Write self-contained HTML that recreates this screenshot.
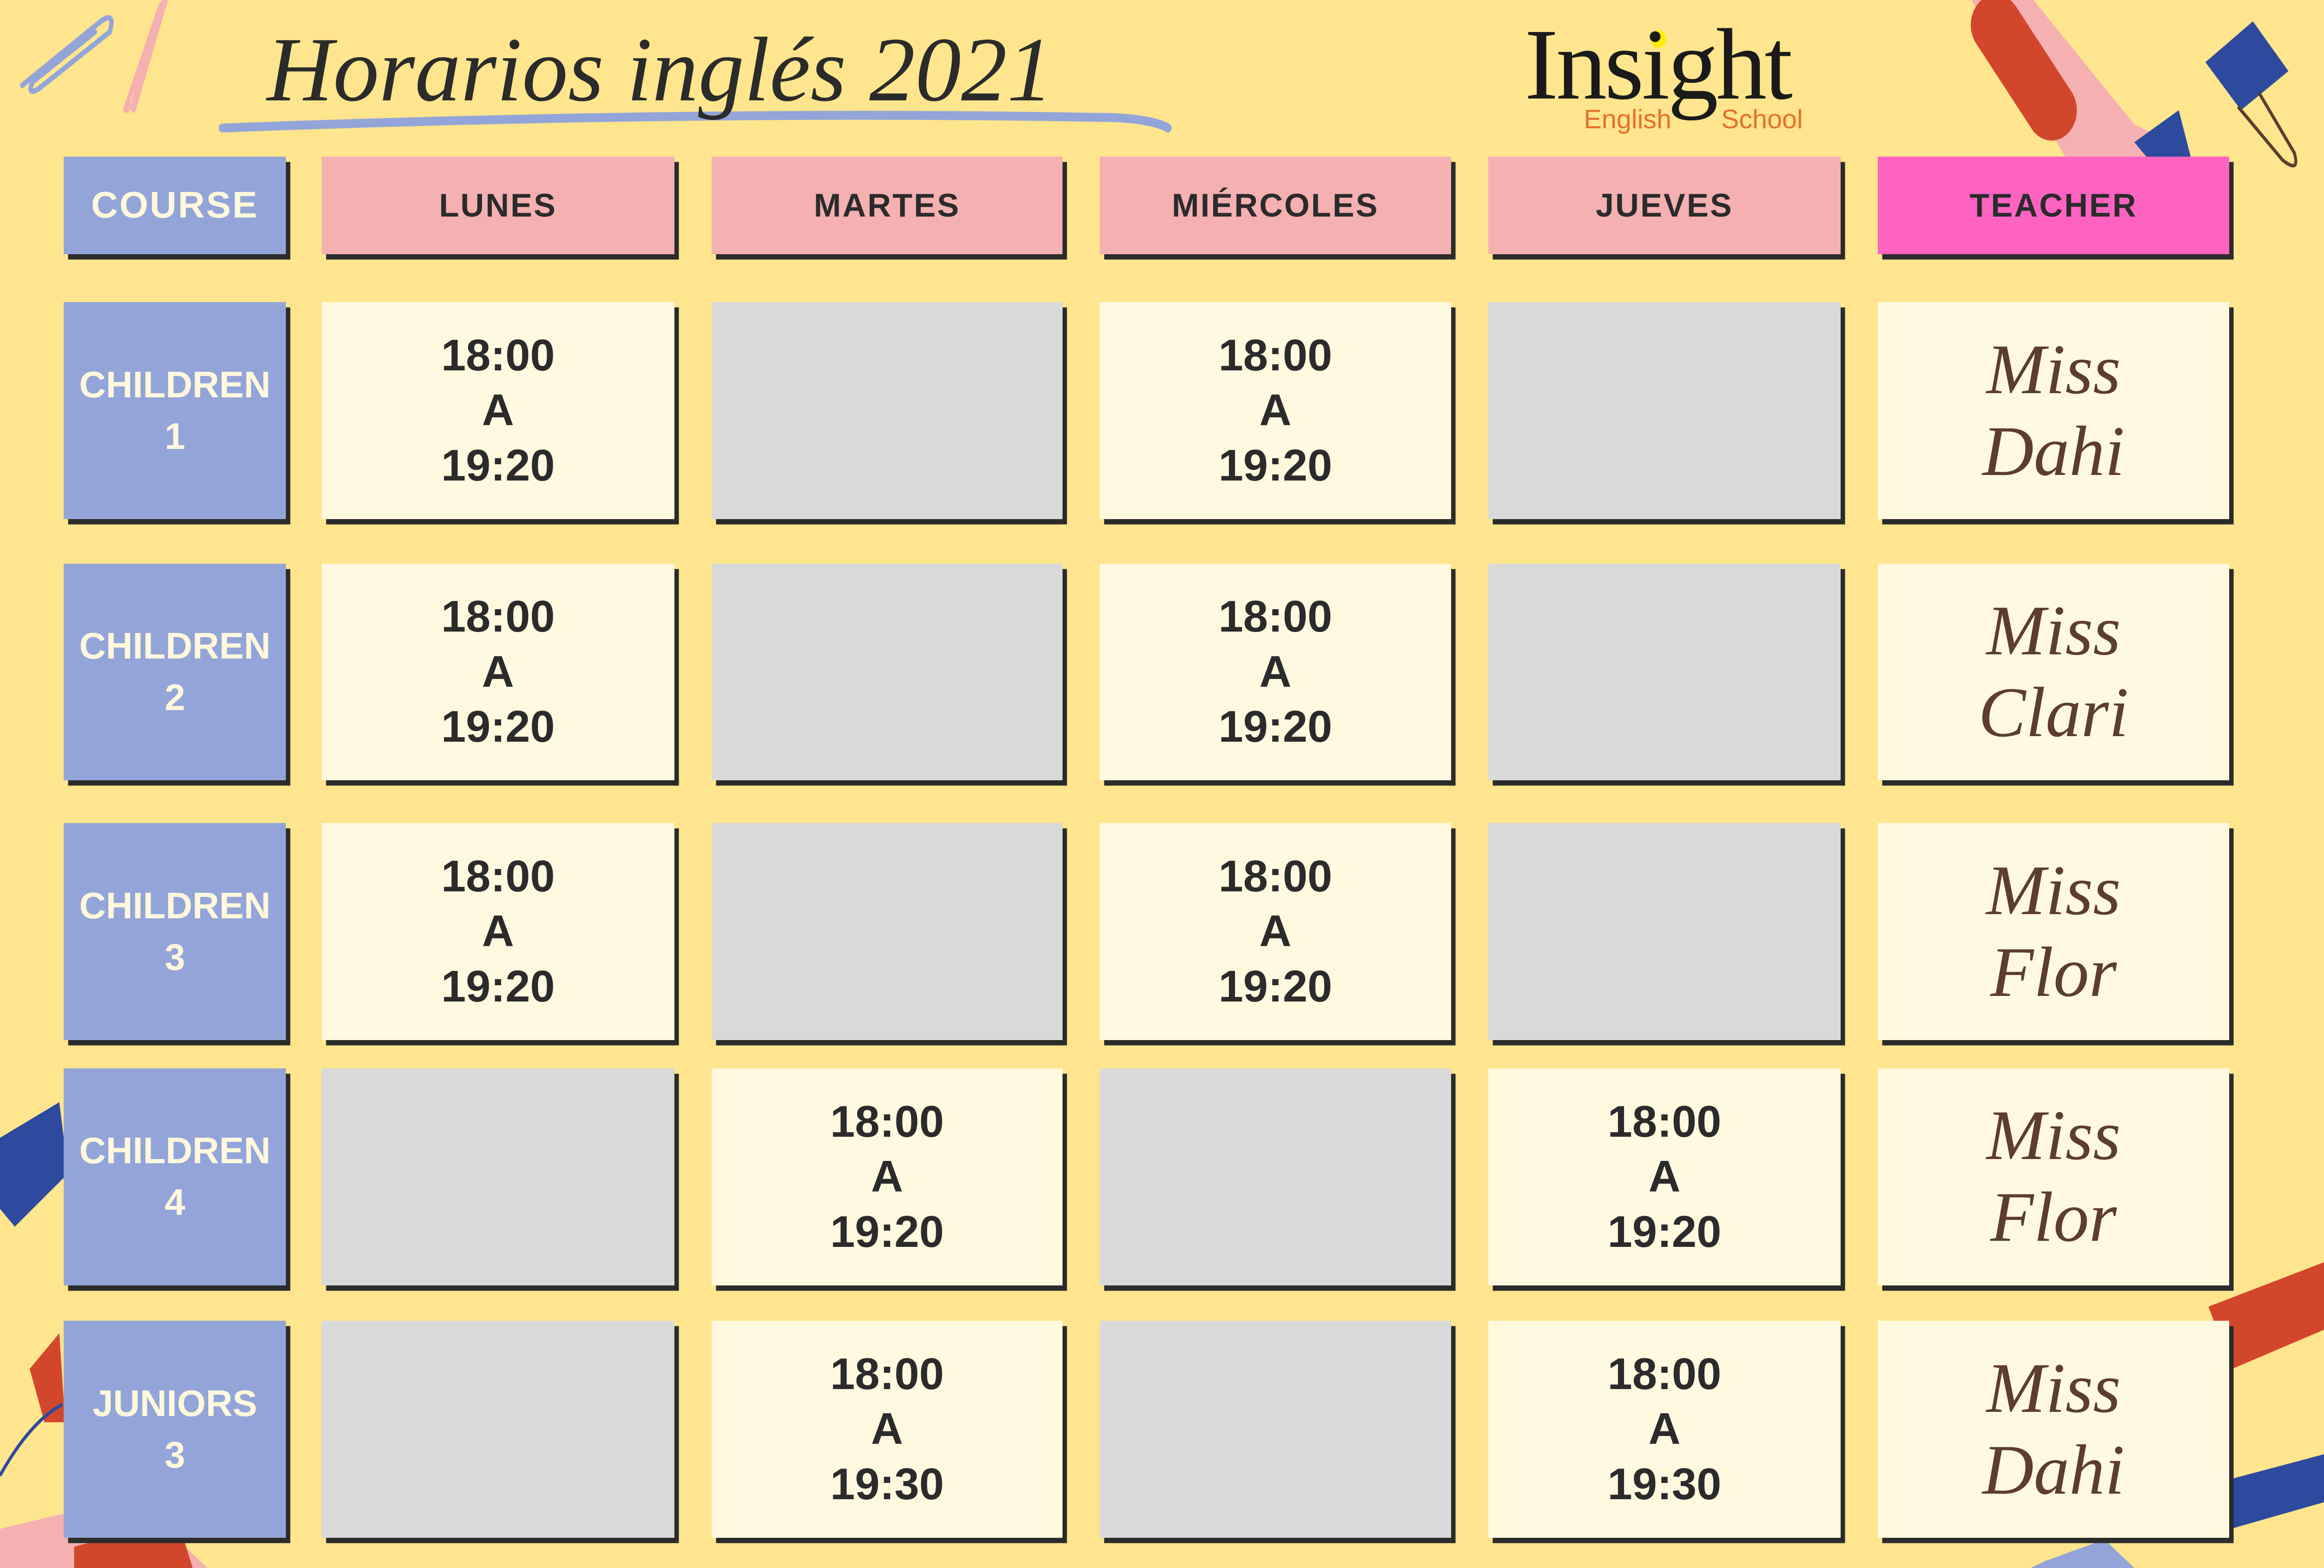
<!DOCTYPE html>
<html><head><meta charset="utf-8"><style>
html,body{margin:0;padding:0;width:100%;height:100%;overflow:hidden;}
body{background:#ffe58d;position:relative;font-family:"Liberation Sans","DejaVu Sans",sans-serif;}
.b{position:absolute;box-sizing:border-box;left:calc(var(--x)*0.063776vw);top:calc(var(--y)*0.113379vh);width:calc(var(--w)*0.063776vw);height:calc(122*0.113379vh);box-shadow:calc(3*0.063776vw) calc(3*0.113379vh) 0 #2b2b2b;display:flex;align-items:center;justify-content:center;text-align:center;font-weight:bold;}
.h{top:calc(88*0.113379vh);height:calc(55*0.113379vh);font-size:calc(22*0.063776vw);letter-spacing:calc(1*0.063776vw);color:#2b2b2b;background:#f5b0b2;}
.c{background:#93a5d8;color:#fff8dc;font-size:calc(25*0.063776vw);line-height:calc(29*0.113379vh);}
.t{background:#fff9df;color:#2b2b2b;font-size:calc(30*0.063776vw);line-height:calc(31*0.113379vh);}
.g{background:#d9d9d9;}
.n{background:#fff9df;color:#5c3d2e;font-family:"Liberation Serif",serif;font-style:italic;font-weight:normal;font-size:calc(48*0.063776vw);line-height:calc(46*0.113379vh);}
.a{position:absolute;white-space:nowrap;}
</style></head><body>
<svg viewBox="0 0 1568 882" preserveAspectRatio="none" style="position:absolute;left:0;top:0;width:100vw;height:100vh">
<g fill="none" stroke-linecap="round">
<path d="M15 48 L68 12 Q78 6 74 18 L26 50 Q18 54 22 46 L64 18" stroke="#93a5d8" stroke-width="3"/>
<path d="M90 62 L110 5 Q114 -4 108 4 L86 58 Q82 66 90 58 L104 14" stroke="#f5b0b2" stroke-width="3"/>
</g>
<path d="M1330 0 L1372 0 L1440 70 L1478 85 L1470 100 L1402 100 Z" fill="#f5b0b2"/>
<rect x="1350" y="-10" width="34" height="95" rx="17" fill="#d2472c" transform="rotate(-38 1367 40)"/>
<path d="M1440 80 L1470 62 L1478 88 L1452 92 Z" fill="#2e4a9e"/>
<path d="M1488 35 L1520 12 L1544 40 L1512 62 Z" fill="#2e4a9e"/>
<path d="M1510 60 L1540 90 Q1552 98 1548 86 L1524 52" fill="none" stroke="#5c3d2e" stroke-width="2"/>
<path d="M0 640 L40 620 L46 660 L10 690 L0 680Z" fill="#2e4a9e"/>
<path d="M20 770 L40 750 L44 800 L30 800Z" fill="#d2472c"/>
<path d="M0 830 Q20 800 42 790" fill="none" stroke="#2e4a9e" stroke-width="2"/>
<path d="M0 860 L90 842 L140 882 L0 882Z" fill="#f5b0b2"/>
<path d="M50 870 L120 855 L130 882 L50 882Z" fill="#d2472c"/>
<path d="M1490 735 L1568 710 L1568 748 L1506 770Z" fill="#d2472c"/>
<path d="M1505 832 L1568 818 L1568 845 L1505 860Z" fill="#2e4a9e"/>
<path d="M1380 878 L1420 866 L1440 882 L1370 882Z" fill="#93a5d8"/>
<path d="M150 72 Q470 62 740 66 Q775 66 788 72" fill="none" stroke="#93a5d8" stroke-width="5" stroke-linecap="round"/>
<circle cx="1119" cy="22" r="5" fill="#ffee00"/>
</svg>
<div class="a" style="left:11.48vw;top:0;font-family:'Liberation Serif',serif;font-style:italic;font-size:3.954vw;line-height:8.89vh;color:#2b2b2b;">Horarios inglés 2021</div>
<div class="a" style="left:65.6vw;top:0.3vh;font-family:'Liberation Serif',serif;font-size:4.37vw;line-height:7.7vh;color:#1a1a1a;letter-spacing:-0.1vw;">Insight</div>
<div class="a" style="left:68.15vw;top:6.64vh;font-size:1.15vw;color:#e8702a;">English</div>
<div class="a" style="left:74.06vw;top:6.64vh;font-size:1.15vw;color:#e8702a;">School</div>

<div class="b h c" style="--x:43;--w:150;color:#fff8dc;background:#93a5d8">COURSE</div>
<div class="b h" style="--x:217;--w:238">LUNES</div>
<div class="b h" style="--x:480;--w:237">MARTES</div>
<div class="b h" style="--x:742;--w:237">MIÉRCOLES</div>
<div class="b h" style="--x:1004;--w:238">JUEVES</div>
<div class="b h" style="--x:1267;--w:237;background:#ff63c1">TEACHER</div>

<div class="b c" style="--x:43;--y:170;--w:150">CHILDREN<br>1</div>
<div class="b t" style="--x:217;--y:170;--w:238">18:00<br>A<br>19:20</div>
<div class="b g" style="--x:480;--y:170;--w:237"></div>
<div class="b t" style="--x:742;--y:170;--w:237">18:00<br>A<br>19:20</div>
<div class="b g" style="--x:1004;--y:170;--w:238"></div>
<div class="b n" style="--x:1267;--y:170;--w:237">Miss<br>Dahi</div>

<div class="b c" style="--x:43;--y:317;--w:150">CHILDREN<br>2</div>
<div class="b t" style="--x:217;--y:317;--w:238">18:00<br>A<br>19:20</div>
<div class="b g" style="--x:480;--y:317;--w:237"></div>
<div class="b t" style="--x:742;--y:317;--w:237">18:00<br>A<br>19:20</div>
<div class="b g" style="--x:1004;--y:317;--w:238"></div>
<div class="b n" style="--x:1267;--y:317;--w:237">Miss<br>Clari</div>

<div class="b c" style="--x:43;--y:463;--w:150">CHILDREN<br>3</div>
<div class="b t" style="--x:217;--y:463;--w:238">18:00<br>A<br>19:20</div>
<div class="b g" style="--x:480;--y:463;--w:237"></div>
<div class="b t" style="--x:742;--y:463;--w:237">18:00<br>A<br>19:20</div>
<div class="b g" style="--x:1004;--y:463;--w:238"></div>
<div class="b n" style="--x:1267;--y:463;--w:237">Miss<br>Flor</div>

<div class="b c" style="--x:43;--y:601;--w:150">CHILDREN<br>4</div>
<div class="b g" style="--x:217;--y:601;--w:238"></div>
<div class="b t" style="--x:480;--y:601;--w:237">18:00<br>A<br>19:20</div>
<div class="b g" style="--x:742;--y:601;--w:237"></div>
<div class="b t" style="--x:1004;--y:601;--w:238">18:00<br>A<br>19:20</div>
<div class="b n" style="--x:1267;--y:601;--w:237">Miss<br>Flor</div>

<div class="b c" style="--x:43;--y:743;--w:150">JUNIORS<br>3</div>
<div class="b g" style="--x:217;--y:743;--w:238"></div>
<div class="b t" style="--x:480;--y:743;--w:237">18:00<br>A<br>19:30</div>
<div class="b g" style="--x:742;--y:743;--w:237"></div>
<div class="b t" style="--x:1004;--y:743;--w:238">18:00<br>A<br>19:30</div>
<div class="b n" style="--x:1267;--y:743;--w:237">Miss<br>Dahi</div>
</body></html>
